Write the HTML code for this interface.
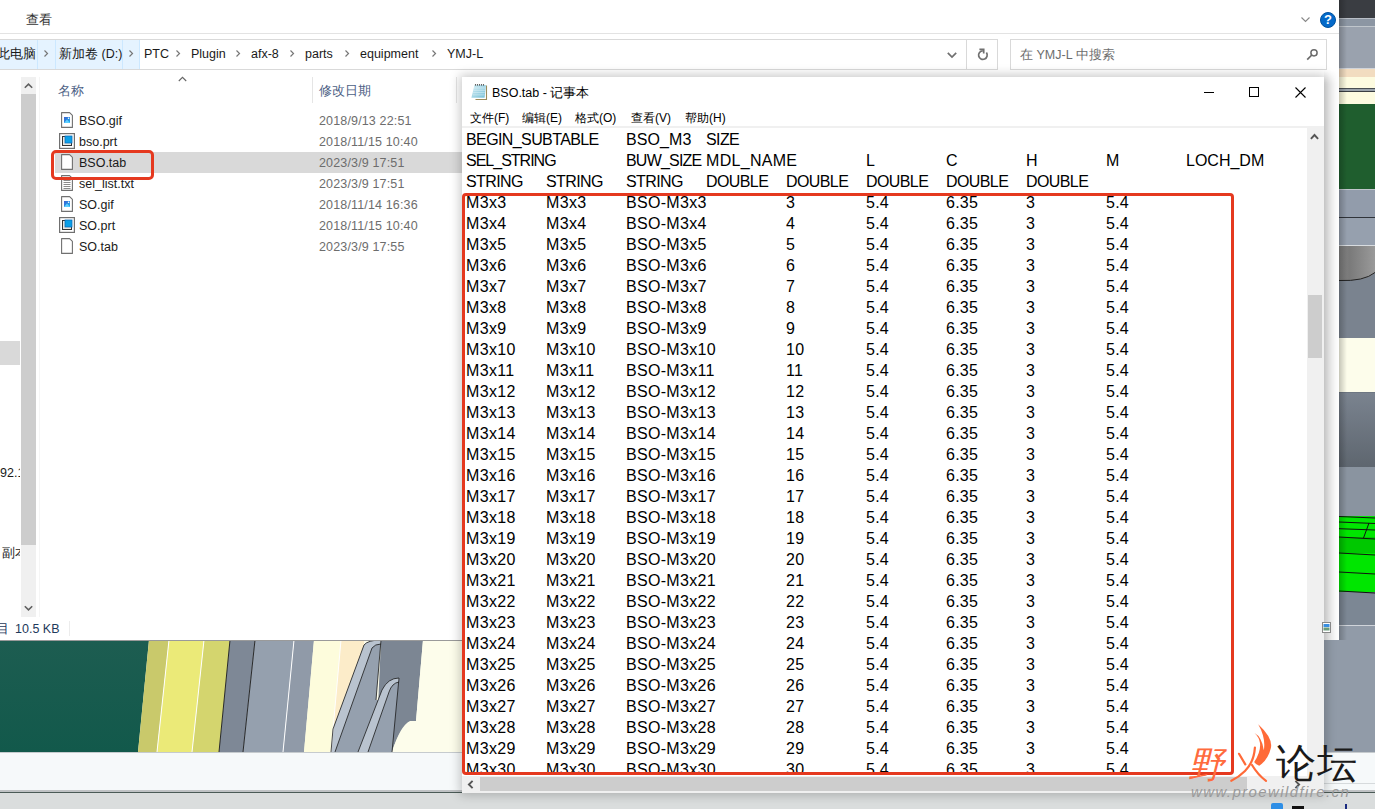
<!DOCTYPE html><html><head><meta charset="utf-8"><title>BSO.tab</title><style>
*{margin:0;padding:0;box-sizing:border-box}
html,body{width:1375px;height:809px;overflow:hidden;background:#dcdcdc;font-family:"Liberation Sans",sans-serif;position:relative}
.a{position:absolute}
.e{position:absolute;font-size:12.5px;color:#1a1a1a;white-space:nowrap;line-height:15px;padding-top:1px}
.d{position:absolute;font-size:12.5px;color:#6d6d6d;white-space:nowrap;line-height:15px;letter-spacing:0.15px;padding-top:1px}
.n{position:absolute;font-size:16px;color:#000;white-space:nowrap;line-height:21px}
.red{position:absolute;border:3px solid #e5391f;border-radius:6px}
svg{position:absolute;overflow:visible}
</style></head><body>
<div class="a" style="left:1324px;top:0px;width:51px;height:18px;background:#3a3d42"></div>
<div class="a" style="left:1324px;top:18px;width:51px;height:1px;background:#b8bec6"></div>
<div class="a" style="left:1324px;top:19px;width:51px;height:7px;background:#8c96a3"></div>
<div class="a" style="left:1324px;top:26px;width:51px;height:1px;background:#c0c6cc"></div>
<div class="a" style="left:1324px;top:27px;width:51px;height:41px;background:#9aa2ae"></div>
<div class="a" style="left:1324px;top:68px;width:51px;height:1px;background:#d0d4da"></div>
<div class="a" style="left:1324px;top:69px;width:51px;height:8px;background:#f2dcc0"></div>
<div class="a" style="left:1324px;top:77px;width:51px;height:11px;background:#fdfbe0"></div>
<div class="a" style="left:1324px;top:88px;width:51px;height:1px;background:#4a4e52"></div>
<div class="a" style="left:1324px;top:89px;width:51px;height:2px;background:#9aa2aa"></div>
<div class="a" style="left:1324px;top:91px;width:51px;height:1px;background:#3a3e42"></div>
<div class="a" style="left:1324px;top:92px;width:51px;height:12px;background:#fdfbe0"></div>
<div class="a" style="left:1324px;top:104px;width:51px;height:85px;background:#1f5e2e"></div>
<div class="a" style="left:1324px;top:189px;width:51px;height:1px;background:#c0c6cc"></div>
<div class="a" style="left:1324px;top:190px;width:51px;height:27px;background:#929cab"></div>
<div class="a" style="left:1324px;top:217px;width:51px;height:1px;background:#30343a"></div>
<div class="a" style="left:1324px;top:218px;width:51px;height:27px;background:#96a0ae"></div>
<div class="a" style="left:1324px;top:245px;width:51px;height:1px;background:#d8dce0"></div>
<div class="a" style="left:1324px;top:246px;width:51px;height:34px;background:#858585"></div>
<div class="a" style="left:1324px;top:280px;width:51px;height:58px;background:#7a838f"></div>
<div class="a" style="left:1324px;top:338px;width:51px;height:54px;background:#fdfdeb"></div>
<div class="a" style="left:1324px;top:392px;width:51px;height:75px;background:#6e7782"></div>
<div class="a" style="left:1324px;top:467px;width:51px;height:49px;background:#8a94a0"></div>
<div class="a" style="left:1324px;top:516px;width:51px;height:76px;background:#00e600"></div>
<div class="a" style="left:1324px;top:592px;width:51px;height:33px;background:#7c8794"></div>
<div class="a" style="left:1324px;top:625px;width:51px;height:1px;background:#d0d4da"></div>
<div class="a" style="left:1324px;top:626px;width:51px;height:126px;background:#919ba8"></div>
<div class="a" style="left:1324px;top:393px;width:51px;height:74px;background:linear-gradient(#7a838f,#5e666f)"></div>
<div class="a" style="left:1324px;top:246px;width:51px;height:34px;background:linear-gradient(90deg,#8a8a8a,#7a7a7a 50%,#9a9a9a)"></div>
<svg width="51" height="40" style="left:1324px;top:250px"><path d="M15 31 Q40 32 51 23 L51 40 L15 40 Z" fill="#7a838f"/><path d="M15 30.5 Q40 31.5 51 22.5" stroke="#222" stroke-width="1" fill="none"/></svg>
<svg width="51" height="80" style="left:1324px;top:512px"><rect x="15" y="25" width="36" height="16" fill="#00c800"/><path d="M15 4.5 L51 6 M15 10 L51 11.5 M15 16.7 L51 18 M15 25 L51 27 M15 41 L51 43 M15 60 L51 62 M15 79 L51 81 M45 11 L39.5 26" stroke="#111" stroke-width="1" fill="none"/></svg>
<div class="a" style="left:1339px;top:0;width:8px;height:646px;background:linear-gradient(90deg,rgba(0,0,0,.22),rgba(0,0,0,0))"></div>
<svg width="1324" height="112" style="left:0;top:640px"><rect x="0" y="0" width="1324" height="112" fill="#fdfdeb"/><defs><linearGradient id="grn" x1="0" y1="0" x2="0" y2="1"><stop offset="0" stop-color="#1d5d51"/><stop offset="1" stop-color="#12594b"/></linearGradient></defs><polygon points="0,0 149,0 138,112 0,112" fill="url(#grn)"/><polygon points="149,0 169,0 157,112 138,112" fill="#c9c96b"/><polygon points="169,0 204,0 192,112 157,112" fill="#ebea78"/><polygon points="204,0 230,0 219,112 192,112" fill="#d4d56e"/><polygon points="230,0 255,0 243,112 219,112" fill="#7e8896"/><polygon points="255,0 294,0 283,112 243,112" fill="#95a0ae"/><polygon points="294,0 314,0 304,112 283,112" fill="#909aa8"/><polygon points="314,0 341,0 331,112 304,112" fill="#fdfcdc"/><polygon points="341,0 364,0 364,5 333,89 331,112 331,112" fill="#fcecc9"/><path d="M381,0 L423,0 L416,81 Q402,81 392,112 L376,112 Z" fill="#7c8693"/><path d="M392,112 Q400,86 410,81 L416,81 L423,0 L462,0 L462,112 Z" fill="#fdfdeb"/><path d="M364,5 Q368,0 381,0 L376,60 L385,60 L370,112 L331,112 L333,89 Z" fill="#95a0ae"/><path d="M364,5 Q368,0 381,0 L381,4 Q375,4 372,8 L335,112 L331,112 L333,89 Z" fill="#b9c3cf"/><path d="M382,50 Q388,38 399,38 L392,112 L358,112 Z" fill="#95a0ae"/><path d="M382,50 Q388,38 399,38 L399,42 Q392,43 389,52 L368,112 L358,112 Z" fill="#b9c3cf"/><path d="M169 0 L157 112 M204 0 L192 112 M294 0 L283 112 M341 0 L331 112" stroke="#fff" stroke-width="1" fill="none"/><path d="M230 0 L219 112 M255 0 L243 112" stroke="#1a1a1a" stroke-width="0.9" fill="none"/><path d="M364,5 Q368,0 381,0 L376,60 M364,5 L333,89 L331,112 M372,8 Q375,4 381,4 M372,8 L335,112 M382,50 Q388,38 399,38 L392,112 M382,50 L358,112 M389,52 Q392,43 399,42 M389,52 L368,112" stroke="#1a1a1a" stroke-width="0.8" fill="none"/><rect x="0" y="0" width="1324" height="1" fill="#9a9a9a"/></svg>
<div class="a" style="left:1324px;top:640px;width:51px;height:112px;background:#919ba8"></div>
<div class="a" style="left:0;top:752px;width:1375px;height:38px;background:#f6f9fa;border-top:1px solid #c6cbce"></div>
<div class="a" style="left:1324px;top:783px;width:51px;height:1px;background:#d6dadc"></div>
<div class="a" style="left:0;top:790px;width:1375px;height:2px;background:#bfc2c4"></div>
<div class="a" style="left:0;top:792px;width:1375px;height:1px;background:#4a5a56"></div>
<div class="a" style="left:0;top:793px;width:1375px;height:16px;background:#dadddd"></div>
<div class="a" style="left:0;top:0;width:1339px;height:640px;background:#fff"></div>
<div class="a" style="left:1324px;top:70px;width:15px;height:570px;background:linear-gradient(90deg,rgba(0,0,0,.1),rgba(0,0,0,0));-webkit-mask-image:linear-gradient(rgba(0,0,0,0),#000 14px)"></div>
<div class="e" style="left:26px;top:12px;color:#333">查看</div>
<svg width="10" height="6" style="left:1301px;top:17px"><path d="M0.5 0.5 L4.5 4.5 L8.5 0.5" stroke="#888" stroke-width="1.1" fill="none"/></svg>
<div class="a" style="left:1320px;top:12px;width:16px;height:16px;border-radius:50%;background:#0469c9;border:1px solid #00529f"></div>
<div class="a" style="left:1320px;top:11px;width:16px;height:16px;font-size:13px;font-weight:bold;color:#fff;text-align:center;line-height:18px">?</div>
<div class="a" style="left:0;top:33px;width:1339px;height:1px;background:#e3e3e3"></div>
<div class="a" style="left:-2px;top:39px;width:1000px;height:31px;border:1px solid #d9d9d9"></div>
<div class="a" style="left:0;top:40px;width:38px;height:29px;background:#e5f3ff;border-right:1px solid #cce8ff"></div>
<div class="a" style="left:38px;top:40px;width:17px;height:29px;background:#e5f3ff"></div>
<div class="a" style="left:55px;top:40px;width:68px;height:29px;background:#e5f3ff;border-left:1px solid #cce8ff;border-right:1px solid #cce8ff"></div>
<div class="a" style="left:123px;top:40px;width:17px;height:29px;background:#e5f3ff;border-right:1px solid #cce8ff"></div>
<div class="e" style="left:-3px;top:46px">此电脑</div>
<div class="e" style="left:59px;top:46px">新加卷 (D:)</div>
<div class="e" style="left:144px;top:46px">PTC</div>
<div class="e" style="left:191px;top:46px">Plugin</div>
<div class="e" style="left:251px;top:46px">afx-8</div>
<div class="e" style="left:305px;top:46px">parts</div>
<div class="e" style="left:360px;top:46px">equipment</div>
<div class="e" style="left:447px;top:46px">YMJ-L</div>
<svg width="5" height="8" style="left:44px;top:50px"><path d="M0.5 0.5 L3.5 3.5 L0.5 6.5" stroke="#777" stroke-width="1.2" fill="none"/></svg>
<svg width="5" height="8" style="left:129px;top:50px"><path d="M0.5 0.5 L3.5 3.5 L0.5 6.5" stroke="#777" stroke-width="1.2" fill="none"/></svg>
<svg width="5" height="8" style="left:176px;top:50px"><path d="M0.5 0.5 L3.5 3.5 L0.5 6.5" stroke="#777" stroke-width="1.2" fill="none"/></svg>
<svg width="5" height="8" style="left:236px;top:50px"><path d="M0.5 0.5 L3.5 3.5 L0.5 6.5" stroke="#777" stroke-width="1.2" fill="none"/></svg>
<svg width="5" height="8" style="left:290px;top:50px"><path d="M0.5 0.5 L3.5 3.5 L0.5 6.5" stroke="#777" stroke-width="1.2" fill="none"/></svg>
<svg width="5" height="8" style="left:345px;top:50px"><path d="M0.5 0.5 L3.5 3.5 L0.5 6.5" stroke="#777" stroke-width="1.2" fill="none"/></svg>
<svg width="5" height="8" style="left:432px;top:50px"><path d="M0.5 0.5 L3.5 3.5 L0.5 6.5" stroke="#777" stroke-width="1.2" fill="none"/></svg>
<svg width="12" height="8" style="left:947px;top:52px"><path d="M0.8 0.8 L5 5 L9.2 0.8" stroke="#707070" stroke-width="1.7" fill="none"/></svg>
<div class="a" style="left:966px;top:40px;width:1px;height:29px;background:#d9d9d9"></div>
<svg width="14" height="14" style="left:976px;top:48px"><path d="M10.4 4.6 A4.3 4.3 0 1 1 6.8 2.8" stroke="#707070" stroke-width="1.7" fill="none"/><path d="M3.4 1.4 H7.7 V5.6" stroke="#707070" stroke-width="1.7" fill="none"/></svg>
<div class="a" style="left:1010px;top:39px;width:317px;height:31px;border:1px solid #d9d9d9"></div>
<div class="e" style="left:1020px;top:47px;color:#6d6d6d">在 YMJ-L 中搜索</div>
<svg width="14" height="14" style="left:1305px;top:47px"><circle cx="9" cy="5.8" r="3.1" stroke="#6a6a6a" stroke-width="1.5" fill="none"/><path d="M6.8 8 L2.2 12.6" stroke="#6a6a6a" stroke-width="1.7"/></svg>
<div class="a" style="left:0;top:341px;width:20px;height:24px;background:#d9d9d9"></div>
<div class="a" style="left:0;top:440px;width:20px;height:140px;overflow:hidden"><div class="e" style="left:0px;top:25px">92.1</div><div class="e" style="left:2px;top:105px">副本</div></div>
<div class="a" style="left:20px;top:460px;width:1px;height:100px;background:#fff"></div>
<div class="a" style="left:21px;top:77px;width:15px;height:540px;background:#f0f0f0"></div>
<div class="a" style="left:21px;top:94px;width:15px;height:451px;background:#cdcdcd"></div>
<svg width="9" height="6" style="left:24px;top:83px"><path d="M0.8 4.8 L4.5 1.2 L8.2 4.8" stroke="#606060" stroke-width="1.6" fill="none"/></svg>
<svg width="9" height="6" style="left:24px;top:605px"><path d="M0.8 1.2 L4.5 4.8 L8.2 1.2" stroke="#606060" stroke-width="1.6" fill="none"/></svg>
<div class="a" style="left:39px;top:77px;width:1px;height:540px;background:#f5f5f5"></div>
<svg width="10" height="6" style="left:178px;top:76px"><path d="M0.8 5 L4.5 1.3 L8.2 5" stroke="#666" stroke-width="1.1" fill="none"/></svg>
<div class="e" style="left:58px;top:83px;color:#4d6185">名称</div>
<div class="e" style="left:319px;top:83px;color:#4d6185">修改日期</div>
<div class="a" style="left:312px;top:77px;width:1px;height:26px;background:#e5e5e5"></div>
<div class="a" style="left:456px;top:77px;width:1px;height:26px;background:#e5e5e5"></div>
<div class="a" style="left:55px;top:152px;width:410px;height:21px;background:#d9d9d9"></div>
<div class="e" style="left:79px;top:113px">BSO.gif</div>
<div class="d" style="left:319px;top:113px">2018/9/13 22:51</div>
<svg width="13" height="17" style="left:61px;top:112px"><path d="M0.6 0.6 H8.6 L11.4 3.4 V15.4 H0.6 Z" fill="#fff" stroke="#707070" stroke-width="1.1" stroke-linejoin="round"/><defs><linearGradient id="gg0" x1="0" y1="0" x2="1" y2="1"><stop offset="0" stop-color="#3b5fd0"/><stop offset="1" stop-color="#19b4f0"/></linearGradient></defs><rect x="3" y="5" width="6" height="6" fill="url(#gg0)"/><path d="M3 11 L6 7.5 L9 11Z" fill="#5fd0ff"/><circle cx="7.6" cy="6.3" r="0.8" fill="#fff"/></svg>
<div class="e" style="left:79px;top:134px">bso.prt</div>
<div class="d" style="left:319px;top:134px">2018/11/15 10:40</div>
<svg width="16" height="16" style="left:59px;top:133px"><rect x="0.6" y="0.6" width="14.8" height="14.8" fill="#fff" stroke="#707070" stroke-width="1.2"/><rect x="3.5" y="3.5" width="9" height="9" fill="#e8e6e0" stroke="#333" stroke-width="1"/><rect x="6" y="3" width="7" height="7" fill="#0aa0e8" stroke="#0a6cb8" stroke-width="0.8"/></svg>
<div class="e" style="left:79px;top:155px">BSO.tab</div>
<div class="d" style="left:319px;top:155px">2023/3/9 17:51</div>
<svg width="13" height="17" style="left:61px;top:154px"><path d="M0.6 0.6 H8.6 L11.4 3.4 V15.4 H0.6 Z" fill="#fff" stroke="#707070" stroke-width="1.1" stroke-linejoin="round"/></svg>
<div class="e" style="left:79px;top:176px">sel_list.txt</div>
<div class="d" style="left:319px;top:176px">2023/3/9 17:51</div>
<svg width="13" height="17" style="left:61px;top:175px"><path d="M0.6 0.6 H8.6 L11.4 3.4 V15.4 H0.6 Z" fill="#fff" stroke="#707070" stroke-width="1.1" stroke-linejoin="round"/><path d="M2.5 5.5 H9.5 M2.5 7.5 H9.5 M2.5 9.5 H9.5 M2.5 11.5 H9.5 M2.5 13.5 H9.5" stroke="#8a8a8a" stroke-width="1"/></svg>
<div class="e" style="left:79px;top:197px">SO.gif</div>
<div class="d" style="left:319px;top:197px">2018/11/14 16:36</div>
<svg width="13" height="17" style="left:61px;top:196px"><path d="M0.6 0.6 H8.6 L11.4 3.4 V15.4 H0.6 Z" fill="#fff" stroke="#707070" stroke-width="1.1" stroke-linejoin="round"/><defs><linearGradient id="gg4" x1="0" y1="0" x2="1" y2="1"><stop offset="0" stop-color="#3b5fd0"/><stop offset="1" stop-color="#19b4f0"/></linearGradient></defs><rect x="3" y="5" width="6" height="6" fill="url(#gg4)"/><path d="M3 11 L6 7.5 L9 11Z" fill="#5fd0ff"/><circle cx="7.6" cy="6.3" r="0.8" fill="#fff"/></svg>
<div class="e" style="left:79px;top:218px">SO.prt</div>
<div class="d" style="left:319px;top:218px">2018/11/15 10:40</div>
<svg width="16" height="16" style="left:59px;top:217px"><rect x="0.6" y="0.6" width="14.8" height="14.8" fill="#fff" stroke="#707070" stroke-width="1.2"/><rect x="3.5" y="3.5" width="9" height="9" fill="#e8e6e0" stroke="#333" stroke-width="1"/><rect x="6" y="3" width="7" height="7" fill="#0aa0e8" stroke="#0a6cb8" stroke-width="0.8"/></svg>
<div class="e" style="left:79px;top:239px">SO.tab</div>
<div class="d" style="left:319px;top:239px">2023/3/9 17:55</div>
<svg width="13" height="17" style="left:61px;top:238px"><path d="M0.6 0.6 H8.6 L11.4 3.4 V15.4 H0.6 Z" fill="#fff" stroke="#707070" stroke-width="1.1" stroke-linejoin="round"/></svg>
<div class="e" style="left:-4px;top:621px;color:#1e395b">目</div>
<div class="e" style="left:15px;top:621px;color:#1e395b">10.5 KB</div>
<div class="a" style="left:69px;top:621px;width:1px;height:15px;background:#ececec"></div>
<div class="a" style="left:462px;top:77px;width:862px;height:716px;background:#fff;box-shadow:0 0 10px 2px rgba(0,0,0,.22)"></div>
<svg width="20" height="20" style="left:469px;top:82px"><defs><linearGradient id="npg" x1="0" y1="0" x2="1" y2="1"><stop offset="0" stop-color="#d5eef5"/><stop offset="1" stop-color="#74bfd6"/></linearGradient></defs><rect x="6" y="3" width="11.8" height="14.6" fill="#fff"/><path d="M6.5 17.5 H17.5 V3.5" stroke="#9b8a5a" stroke-width="1.1" fill="none"/><polygon points="5.5,3 17,3 15.6,15.8 2.4,15.8" fill="url(#npg)"/><path d="M4.8 6 H16.3 M4.5 8.3 H16 M4.2 10.6 H15.8 M3.8 12.9 H15.6" stroke="#e8f6fa" stroke-opacity="0.55" stroke-width="0.9"/><path d="M6.5 2.3 V3.6 M8.5 2.3 V3.6 M10.5 2.3 V3.6 M12.5 2.3 V3.6 M14.5 2.3 V3.6" stroke="#333" stroke-width="1.1"/></svg>
<div class="e" style="left:492px;top:85px;color:#000;font-size:12.5px">BSO.tab - 记事本</div>
<div class="a" style="left:1204px;top:92px;width:10px;height:1px;background:#000"></div>
<div class="a" style="left:1249px;top:87px;width:10px;height:10px;border:1px solid #000"></div>
<svg width="11" height="11" style="left:1295px;top:87px"><path d="M0.5 0.5 L10.5 10.5 M10.5 0.5 L0.5 10.5" stroke="#000" stroke-width="1.1"/></svg>
<div class="e" style="left:470px;top:110px;color:#000;font-size:12px">文件(F)</div>
<div class="e" style="left:522px;top:110px;color:#000;font-size:12px">编辑(E)</div>
<div class="e" style="left:575px;top:110px;color:#000;font-size:12px">格式(O)</div>
<div class="e" style="left:631px;top:110px;color:#000;font-size:12px">查看(V)</div>
<div class="e" style="left:685px;top:110px;color:#000;font-size:12px">帮助(H)</div>
<div class="a" style="left:462px;top:126px;width:862px;height:2px;background:#f0f0f0"></div>
<div class="a" style="left:1307px;top:128px;width:17px;height:665px;background:#f0f0f0"></div>
<svg width="9" height="7" style="left:1310px;top:133px"><path d="M0.9 5.8 L4.5 2 L8.1 5.8" stroke="#555" stroke-width="1.9" fill="none"/></svg>
<div class="a" style="left:1308px;top:295px;width:14px;height:63px;background:#cdcdcd"></div>
<div class="a" style="left:462px;top:776px;width:845px;height:17px;background:#f0f0f0"></div>
<div class="a" style="left:480px;top:777px;width:767px;height:14px;background:#cdcdcd"></div>
<svg width="7" height="9" style="left:467px;top:780px"><path d="M5.6 0.9 L1.9 4.5 L5.6 8.1" stroke="#555" stroke-width="1.9" fill="none"/></svg>
<svg width="7" height="9" style="left:1294px;top:780px"><path d="M1.4 0.9 L5.1 4.5 L1.4 8.1" stroke="#555" stroke-width="1.9" fill="none"/></svg>
<div class="n" style="left:466px;top:129px;letter-spacing:-0.6px">BEGIN_SUBTABLE</div>
<div class="n" style="left:626px;top:129px;letter-spacing:0.1px">BSO_M3</div>
<div class="n" style="left:706px;top:129px;letter-spacing:-0.6px">SIZE</div>
<div class="n" style="left:466px;top:150px;letter-spacing:-1.0px">SEL_STRING</div>
<div class="n" style="left:626px;top:150px;letter-spacing:-0.8px">BUW_SIZE</div>
<div class="n" style="left:706px;top:150px;letter-spacing:0.3px">MDL_NAME</div>
<div class="n" style="left:866px;top:150px;letter-spacing:-0.6px">L</div>
<div class="n" style="left:946px;top:150px;letter-spacing:-0.6px">C</div>
<div class="n" style="left:1026px;top:150px;letter-spacing:-0.6px">H</div>
<div class="n" style="left:1106px;top:150px;letter-spacing:-0.6px">M</div>
<div class="n" style="left:1186px;top:150px">LOCH_DM</div>
<div class="n" style="left:466px;top:171px;letter-spacing:-0.6px">STRING</div>
<div class="n" style="left:546px;top:171px;letter-spacing:-0.6px">STRING</div>
<div class="n" style="left:626px;top:171px;letter-spacing:-0.6px">STRING</div>
<div class="n" style="left:706px;top:171px;letter-spacing:-0.6px">DOUBLE</div>
<div class="n" style="left:786px;top:171px;letter-spacing:-0.6px">DOUBLE</div>
<div class="n" style="left:866px;top:171px;letter-spacing:-0.6px">DOUBLE</div>
<div class="n" style="left:946px;top:171px;letter-spacing:-0.6px">DOUBLE</div>
<div class="n" style="left:1026px;top:171px;letter-spacing:-0.6px">DOUBLE</div>
<div class="n" style="left:466px;top:192px;letter-spacing:0.35px">M3x3</div>
<div class="n" style="left:546px;top:192px;letter-spacing:0.35px">M3x3</div>
<div class="n" style="left:626px;top:192px;letter-spacing:0.3px">BSO-M3x3</div>
<div class="n" style="left:786px;top:192px;letter-spacing:0.25px">3</div>
<div class="n" style="left:866px;top:192px;letter-spacing:0.25px">5.4</div>
<div class="n" style="left:946px;top:192px;letter-spacing:0.25px">6.35</div>
<div class="n" style="left:1026px;top:192px;letter-spacing:0.25px">3</div>
<div class="n" style="left:1106px;top:192px;letter-spacing:0.25px">5.4</div>
<div class="n" style="left:466px;top:213px;letter-spacing:0.35px">M3x4</div>
<div class="n" style="left:546px;top:213px;letter-spacing:0.35px">M3x4</div>
<div class="n" style="left:626px;top:213px;letter-spacing:0.3px">BSO-M3x4</div>
<div class="n" style="left:786px;top:213px;letter-spacing:0.25px">4</div>
<div class="n" style="left:866px;top:213px;letter-spacing:0.25px">5.4</div>
<div class="n" style="left:946px;top:213px;letter-spacing:0.25px">6.35</div>
<div class="n" style="left:1026px;top:213px;letter-spacing:0.25px">3</div>
<div class="n" style="left:1106px;top:213px;letter-spacing:0.25px">5.4</div>
<div class="n" style="left:466px;top:234px;letter-spacing:0.35px">M3x5</div>
<div class="n" style="left:546px;top:234px;letter-spacing:0.35px">M3x5</div>
<div class="n" style="left:626px;top:234px;letter-spacing:0.3px">BSO-M3x5</div>
<div class="n" style="left:786px;top:234px;letter-spacing:0.25px">5</div>
<div class="n" style="left:866px;top:234px;letter-spacing:0.25px">5.4</div>
<div class="n" style="left:946px;top:234px;letter-spacing:0.25px">6.35</div>
<div class="n" style="left:1026px;top:234px;letter-spacing:0.25px">3</div>
<div class="n" style="left:1106px;top:234px;letter-spacing:0.25px">5.4</div>
<div class="n" style="left:466px;top:255px;letter-spacing:0.35px">M3x6</div>
<div class="n" style="left:546px;top:255px;letter-spacing:0.35px">M3x6</div>
<div class="n" style="left:626px;top:255px;letter-spacing:0.3px">BSO-M3x6</div>
<div class="n" style="left:786px;top:255px;letter-spacing:0.25px">6</div>
<div class="n" style="left:866px;top:255px;letter-spacing:0.25px">5.4</div>
<div class="n" style="left:946px;top:255px;letter-spacing:0.25px">6.35</div>
<div class="n" style="left:1026px;top:255px;letter-spacing:0.25px">3</div>
<div class="n" style="left:1106px;top:255px;letter-spacing:0.25px">5.4</div>
<div class="n" style="left:466px;top:276px;letter-spacing:0.35px">M3x7</div>
<div class="n" style="left:546px;top:276px;letter-spacing:0.35px">M3x7</div>
<div class="n" style="left:626px;top:276px;letter-spacing:0.3px">BSO-M3x7</div>
<div class="n" style="left:786px;top:276px;letter-spacing:0.25px">7</div>
<div class="n" style="left:866px;top:276px;letter-spacing:0.25px">5.4</div>
<div class="n" style="left:946px;top:276px;letter-spacing:0.25px">6.35</div>
<div class="n" style="left:1026px;top:276px;letter-spacing:0.25px">3</div>
<div class="n" style="left:1106px;top:276px;letter-spacing:0.25px">5.4</div>
<div class="n" style="left:466px;top:297px;letter-spacing:0.35px">M3x8</div>
<div class="n" style="left:546px;top:297px;letter-spacing:0.35px">M3x8</div>
<div class="n" style="left:626px;top:297px;letter-spacing:0.3px">BSO-M3x8</div>
<div class="n" style="left:786px;top:297px;letter-spacing:0.25px">8</div>
<div class="n" style="left:866px;top:297px;letter-spacing:0.25px">5.4</div>
<div class="n" style="left:946px;top:297px;letter-spacing:0.25px">6.35</div>
<div class="n" style="left:1026px;top:297px;letter-spacing:0.25px">3</div>
<div class="n" style="left:1106px;top:297px;letter-spacing:0.25px">5.4</div>
<div class="n" style="left:466px;top:318px;letter-spacing:0.35px">M3x9</div>
<div class="n" style="left:546px;top:318px;letter-spacing:0.35px">M3x9</div>
<div class="n" style="left:626px;top:318px;letter-spacing:0.3px">BSO-M3x9</div>
<div class="n" style="left:786px;top:318px;letter-spacing:0.25px">9</div>
<div class="n" style="left:866px;top:318px;letter-spacing:0.25px">5.4</div>
<div class="n" style="left:946px;top:318px;letter-spacing:0.25px">6.35</div>
<div class="n" style="left:1026px;top:318px;letter-spacing:0.25px">3</div>
<div class="n" style="left:1106px;top:318px;letter-spacing:0.25px">5.4</div>
<div class="n" style="left:466px;top:339px;letter-spacing:0.35px">M3x10</div>
<div class="n" style="left:546px;top:339px;letter-spacing:0.35px">M3x10</div>
<div class="n" style="left:626px;top:339px;letter-spacing:0.3px">BSO-M3x10</div>
<div class="n" style="left:786px;top:339px;letter-spacing:0.25px">10</div>
<div class="n" style="left:866px;top:339px;letter-spacing:0.25px">5.4</div>
<div class="n" style="left:946px;top:339px;letter-spacing:0.25px">6.35</div>
<div class="n" style="left:1026px;top:339px;letter-spacing:0.25px">3</div>
<div class="n" style="left:1106px;top:339px;letter-spacing:0.25px">5.4</div>
<div class="n" style="left:466px;top:360px;letter-spacing:0.35px">M3x11</div>
<div class="n" style="left:546px;top:360px;letter-spacing:0.35px">M3x11</div>
<div class="n" style="left:626px;top:360px;letter-spacing:0.3px">BSO-M3x11</div>
<div class="n" style="left:786px;top:360px;letter-spacing:0.25px">11</div>
<div class="n" style="left:866px;top:360px;letter-spacing:0.25px">5.4</div>
<div class="n" style="left:946px;top:360px;letter-spacing:0.25px">6.35</div>
<div class="n" style="left:1026px;top:360px;letter-spacing:0.25px">3</div>
<div class="n" style="left:1106px;top:360px;letter-spacing:0.25px">5.4</div>
<div class="n" style="left:466px;top:381px;letter-spacing:0.35px">M3x12</div>
<div class="n" style="left:546px;top:381px;letter-spacing:0.35px">M3x12</div>
<div class="n" style="left:626px;top:381px;letter-spacing:0.3px">BSO-M3x12</div>
<div class="n" style="left:786px;top:381px;letter-spacing:0.25px">12</div>
<div class="n" style="left:866px;top:381px;letter-spacing:0.25px">5.4</div>
<div class="n" style="left:946px;top:381px;letter-spacing:0.25px">6.35</div>
<div class="n" style="left:1026px;top:381px;letter-spacing:0.25px">3</div>
<div class="n" style="left:1106px;top:381px;letter-spacing:0.25px">5.4</div>
<div class="n" style="left:466px;top:402px;letter-spacing:0.35px">M3x13</div>
<div class="n" style="left:546px;top:402px;letter-spacing:0.35px">M3x13</div>
<div class="n" style="left:626px;top:402px;letter-spacing:0.3px">BSO-M3x13</div>
<div class="n" style="left:786px;top:402px;letter-spacing:0.25px">13</div>
<div class="n" style="left:866px;top:402px;letter-spacing:0.25px">5.4</div>
<div class="n" style="left:946px;top:402px;letter-spacing:0.25px">6.35</div>
<div class="n" style="left:1026px;top:402px;letter-spacing:0.25px">3</div>
<div class="n" style="left:1106px;top:402px;letter-spacing:0.25px">5.4</div>
<div class="n" style="left:466px;top:423px;letter-spacing:0.35px">M3x14</div>
<div class="n" style="left:546px;top:423px;letter-spacing:0.35px">M3x14</div>
<div class="n" style="left:626px;top:423px;letter-spacing:0.3px">BSO-M3x14</div>
<div class="n" style="left:786px;top:423px;letter-spacing:0.25px">14</div>
<div class="n" style="left:866px;top:423px;letter-spacing:0.25px">5.4</div>
<div class="n" style="left:946px;top:423px;letter-spacing:0.25px">6.35</div>
<div class="n" style="left:1026px;top:423px;letter-spacing:0.25px">3</div>
<div class="n" style="left:1106px;top:423px;letter-spacing:0.25px">5.4</div>
<div class="n" style="left:466px;top:444px;letter-spacing:0.35px">M3x15</div>
<div class="n" style="left:546px;top:444px;letter-spacing:0.35px">M3x15</div>
<div class="n" style="left:626px;top:444px;letter-spacing:0.3px">BSO-M3x15</div>
<div class="n" style="left:786px;top:444px;letter-spacing:0.25px">15</div>
<div class="n" style="left:866px;top:444px;letter-spacing:0.25px">5.4</div>
<div class="n" style="left:946px;top:444px;letter-spacing:0.25px">6.35</div>
<div class="n" style="left:1026px;top:444px;letter-spacing:0.25px">3</div>
<div class="n" style="left:1106px;top:444px;letter-spacing:0.25px">5.4</div>
<div class="n" style="left:466px;top:465px;letter-spacing:0.35px">M3x16</div>
<div class="n" style="left:546px;top:465px;letter-spacing:0.35px">M3x16</div>
<div class="n" style="left:626px;top:465px;letter-spacing:0.3px">BSO-M3x16</div>
<div class="n" style="left:786px;top:465px;letter-spacing:0.25px">16</div>
<div class="n" style="left:866px;top:465px;letter-spacing:0.25px">5.4</div>
<div class="n" style="left:946px;top:465px;letter-spacing:0.25px">6.35</div>
<div class="n" style="left:1026px;top:465px;letter-spacing:0.25px">3</div>
<div class="n" style="left:1106px;top:465px;letter-spacing:0.25px">5.4</div>
<div class="n" style="left:466px;top:486px;letter-spacing:0.35px">M3x17</div>
<div class="n" style="left:546px;top:486px;letter-spacing:0.35px">M3x17</div>
<div class="n" style="left:626px;top:486px;letter-spacing:0.3px">BSO-M3x17</div>
<div class="n" style="left:786px;top:486px;letter-spacing:0.25px">17</div>
<div class="n" style="left:866px;top:486px;letter-spacing:0.25px">5.4</div>
<div class="n" style="left:946px;top:486px;letter-spacing:0.25px">6.35</div>
<div class="n" style="left:1026px;top:486px;letter-spacing:0.25px">3</div>
<div class="n" style="left:1106px;top:486px;letter-spacing:0.25px">5.4</div>
<div class="n" style="left:466px;top:507px;letter-spacing:0.35px">M3x18</div>
<div class="n" style="left:546px;top:507px;letter-spacing:0.35px">M3x18</div>
<div class="n" style="left:626px;top:507px;letter-spacing:0.3px">BSO-M3x18</div>
<div class="n" style="left:786px;top:507px;letter-spacing:0.25px">18</div>
<div class="n" style="left:866px;top:507px;letter-spacing:0.25px">5.4</div>
<div class="n" style="left:946px;top:507px;letter-spacing:0.25px">6.35</div>
<div class="n" style="left:1026px;top:507px;letter-spacing:0.25px">3</div>
<div class="n" style="left:1106px;top:507px;letter-spacing:0.25px">5.4</div>
<div class="n" style="left:466px;top:528px;letter-spacing:0.35px">M3x19</div>
<div class="n" style="left:546px;top:528px;letter-spacing:0.35px">M3x19</div>
<div class="n" style="left:626px;top:528px;letter-spacing:0.3px">BSO-M3x19</div>
<div class="n" style="left:786px;top:528px;letter-spacing:0.25px">19</div>
<div class="n" style="left:866px;top:528px;letter-spacing:0.25px">5.4</div>
<div class="n" style="left:946px;top:528px;letter-spacing:0.25px">6.35</div>
<div class="n" style="left:1026px;top:528px;letter-spacing:0.25px">3</div>
<div class="n" style="left:1106px;top:528px;letter-spacing:0.25px">5.4</div>
<div class="n" style="left:466px;top:549px;letter-spacing:0.35px">M3x20</div>
<div class="n" style="left:546px;top:549px;letter-spacing:0.35px">M3x20</div>
<div class="n" style="left:626px;top:549px;letter-spacing:0.3px">BSO-M3x20</div>
<div class="n" style="left:786px;top:549px;letter-spacing:0.25px">20</div>
<div class="n" style="left:866px;top:549px;letter-spacing:0.25px">5.4</div>
<div class="n" style="left:946px;top:549px;letter-spacing:0.25px">6.35</div>
<div class="n" style="left:1026px;top:549px;letter-spacing:0.25px">3</div>
<div class="n" style="left:1106px;top:549px;letter-spacing:0.25px">5.4</div>
<div class="n" style="left:466px;top:570px;letter-spacing:0.35px">M3x21</div>
<div class="n" style="left:546px;top:570px;letter-spacing:0.35px">M3x21</div>
<div class="n" style="left:626px;top:570px;letter-spacing:0.3px">BSO-M3x21</div>
<div class="n" style="left:786px;top:570px;letter-spacing:0.25px">21</div>
<div class="n" style="left:866px;top:570px;letter-spacing:0.25px">5.4</div>
<div class="n" style="left:946px;top:570px;letter-spacing:0.25px">6.35</div>
<div class="n" style="left:1026px;top:570px;letter-spacing:0.25px">3</div>
<div class="n" style="left:1106px;top:570px;letter-spacing:0.25px">5.4</div>
<div class="n" style="left:466px;top:591px;letter-spacing:0.35px">M3x22</div>
<div class="n" style="left:546px;top:591px;letter-spacing:0.35px">M3x22</div>
<div class="n" style="left:626px;top:591px;letter-spacing:0.3px">BSO-M3x22</div>
<div class="n" style="left:786px;top:591px;letter-spacing:0.25px">22</div>
<div class="n" style="left:866px;top:591px;letter-spacing:0.25px">5.4</div>
<div class="n" style="left:946px;top:591px;letter-spacing:0.25px">6.35</div>
<div class="n" style="left:1026px;top:591px;letter-spacing:0.25px">3</div>
<div class="n" style="left:1106px;top:591px;letter-spacing:0.25px">5.4</div>
<div class="n" style="left:466px;top:612px;letter-spacing:0.35px">M3x23</div>
<div class="n" style="left:546px;top:612px;letter-spacing:0.35px">M3x23</div>
<div class="n" style="left:626px;top:612px;letter-spacing:0.3px">BSO-M3x23</div>
<div class="n" style="left:786px;top:612px;letter-spacing:0.25px">23</div>
<div class="n" style="left:866px;top:612px;letter-spacing:0.25px">5.4</div>
<div class="n" style="left:946px;top:612px;letter-spacing:0.25px">6.35</div>
<div class="n" style="left:1026px;top:612px;letter-spacing:0.25px">3</div>
<div class="n" style="left:1106px;top:612px;letter-spacing:0.25px">5.4</div>
<div class="n" style="left:466px;top:633px;letter-spacing:0.35px">M3x24</div>
<div class="n" style="left:546px;top:633px;letter-spacing:0.35px">M3x24</div>
<div class="n" style="left:626px;top:633px;letter-spacing:0.3px">BSO-M3x24</div>
<div class="n" style="left:786px;top:633px;letter-spacing:0.25px">24</div>
<div class="n" style="left:866px;top:633px;letter-spacing:0.25px">5.4</div>
<div class="n" style="left:946px;top:633px;letter-spacing:0.25px">6.35</div>
<div class="n" style="left:1026px;top:633px;letter-spacing:0.25px">3</div>
<div class="n" style="left:1106px;top:633px;letter-spacing:0.25px">5.4</div>
<div class="n" style="left:466px;top:654px;letter-spacing:0.35px">M3x25</div>
<div class="n" style="left:546px;top:654px;letter-spacing:0.35px">M3x25</div>
<div class="n" style="left:626px;top:654px;letter-spacing:0.3px">BSO-M3x25</div>
<div class="n" style="left:786px;top:654px;letter-spacing:0.25px">25</div>
<div class="n" style="left:866px;top:654px;letter-spacing:0.25px">5.4</div>
<div class="n" style="left:946px;top:654px;letter-spacing:0.25px">6.35</div>
<div class="n" style="left:1026px;top:654px;letter-spacing:0.25px">3</div>
<div class="n" style="left:1106px;top:654px;letter-spacing:0.25px">5.4</div>
<div class="n" style="left:466px;top:675px;letter-spacing:0.35px">M3x26</div>
<div class="n" style="left:546px;top:675px;letter-spacing:0.35px">M3x26</div>
<div class="n" style="left:626px;top:675px;letter-spacing:0.3px">BSO-M3x26</div>
<div class="n" style="left:786px;top:675px;letter-spacing:0.25px">26</div>
<div class="n" style="left:866px;top:675px;letter-spacing:0.25px">5.4</div>
<div class="n" style="left:946px;top:675px;letter-spacing:0.25px">6.35</div>
<div class="n" style="left:1026px;top:675px;letter-spacing:0.25px">3</div>
<div class="n" style="left:1106px;top:675px;letter-spacing:0.25px">5.4</div>
<div class="n" style="left:466px;top:696px;letter-spacing:0.35px">M3x27</div>
<div class="n" style="left:546px;top:696px;letter-spacing:0.35px">M3x27</div>
<div class="n" style="left:626px;top:696px;letter-spacing:0.3px">BSO-M3x27</div>
<div class="n" style="left:786px;top:696px;letter-spacing:0.25px">27</div>
<div class="n" style="left:866px;top:696px;letter-spacing:0.25px">5.4</div>
<div class="n" style="left:946px;top:696px;letter-spacing:0.25px">6.35</div>
<div class="n" style="left:1026px;top:696px;letter-spacing:0.25px">3</div>
<div class="n" style="left:1106px;top:696px;letter-spacing:0.25px">5.4</div>
<div class="n" style="left:466px;top:717px;letter-spacing:0.35px">M3x28</div>
<div class="n" style="left:546px;top:717px;letter-spacing:0.35px">M3x28</div>
<div class="n" style="left:626px;top:717px;letter-spacing:0.3px">BSO-M3x28</div>
<div class="n" style="left:786px;top:717px;letter-spacing:0.25px">28</div>
<div class="n" style="left:866px;top:717px;letter-spacing:0.25px">5.4</div>
<div class="n" style="left:946px;top:717px;letter-spacing:0.25px">6.35</div>
<div class="n" style="left:1026px;top:717px;letter-spacing:0.25px">3</div>
<div class="n" style="left:1106px;top:717px;letter-spacing:0.25px">5.4</div>
<div class="n" style="left:466px;top:738px;letter-spacing:0.35px">M3x29</div>
<div class="n" style="left:546px;top:738px;letter-spacing:0.35px">M3x29</div>
<div class="n" style="left:626px;top:738px;letter-spacing:0.3px">BSO-M3x29</div>
<div class="n" style="left:786px;top:738px;letter-spacing:0.25px">29</div>
<div class="n" style="left:866px;top:738px;letter-spacing:0.25px">5.4</div>
<div class="n" style="left:946px;top:738px;letter-spacing:0.25px">6.35</div>
<div class="n" style="left:1026px;top:738px;letter-spacing:0.25px">3</div>
<div class="n" style="left:1106px;top:738px;letter-spacing:0.25px">5.4</div>
<div class="n" style="left:466px;top:759px;letter-spacing:0.35px">M3x30</div>
<div class="n" style="left:546px;top:759px;letter-spacing:0.35px">M3x30</div>
<div class="n" style="left:626px;top:759px;letter-spacing:0.3px">BSO-M3x30</div>
<div class="n" style="left:786px;top:759px;letter-spacing:0.25px">30</div>
<div class="n" style="left:866px;top:759px;letter-spacing:0.25px">5.4</div>
<div class="n" style="left:946px;top:759px;letter-spacing:0.25px">6.35</div>
<div class="n" style="left:1026px;top:759px;letter-spacing:0.25px">3</div>
<div class="n" style="left:1106px;top:759px;letter-spacing:0.25px">5.4</div>
<div class="a" style="left:462px;top:776px;width:845px;height:17px;background:#f0f0f0"></div>
<div class="a" style="left:480px;top:777px;width:767px;height:14px;background:#cdcdcd"></div>
<svg width="7" height="9" style="left:467px;top:780px"><path d="M5.6 0.9 L1.9 4.5 L5.6 8.1" stroke="#555" stroke-width="1.9" fill="none"/></svg>
<svg width="7" height="9" style="left:1294px;top:780px"><path d="M1.4 0.9 L5.1 4.5 L1.4 8.1" stroke="#555" stroke-width="1.9" fill="none"/></svg>
<div class="red" style="left:462px;top:193px;width:772px;height:582px;border-radius:4px"></div>
<div class="red" style="left:51px;top:150px;width:103px;height:30px;border-radius:5px"></div>
<div class="a" style="left:1188px;top:745px;font-size:36px;color:#ff6b3d;line-height:40px;font-style:italic;font-weight:300">野</div>
<svg width="60" height="70" style="left:1225px;top:720px"><g transform="translate(-1225,-720)"><path d="M1258.2,724.3 Q1273,738 1270.9,748 Q1268,760 1259.2,765.7 Q1256,765 1254.2,762 Q1261,752 1260,743 Q1259,737 1254.5,733 Q1262,737 1263.8,750.3 Q1266,738 1258.2,724.3 Z" fill="#ff6a38"/><path d="M1239,753.8 L1245.3,764.4" stroke="#ff6a38" stroke-width="2.2" stroke-linecap="round" fill="none"/><path d="M1254.9,747.6 Q1254,762 1245,771 Q1239,777 1231.3,780.8" stroke="#ff6a38" stroke-width="2.2" stroke-linecap="round" fill="none"/><path d="M1252,765 Q1258,775 1266,780.8" stroke="#ff6a38" stroke-width="2.2" stroke-linecap="round" fill="none"/></g></svg>
<div class="a" style="left:1276px;top:740px;font-size:40px;letter-spacing:1px;color:#1a1a1a;line-height:46px;font-weight:100">论坛</div>
<div class="a" style="left:1191px;top:784px;font-size:15px;color:#9a9a9a;line-height:16px;font-style:italic;letter-spacing:1.4px">www.proewildfire.cn</div>
<svg width="10" height="12" style="left:1322px;top:622px"><rect x="0.5" y="0.5" width="8" height="10" fill="#fff" stroke="#888"/><rect x="1.5" y="2" width="6" height="3" fill="#3a8ee0"/><rect x="1.5" y="5.5" width="6" height="3" fill="#6a9a7a"/></svg>
<div class="a" style="left:1292px;top:806px;width:12px;height:3px;background:#111"></div>
<div class="a" style="left:1345px;top:804px;width:2px;height:5px;background:#1a2a80"></div>
<div class="a" style="left:1271px;top:803px;width:12px;height:8px;background:#2d8ee6;border-radius:2px"></div>
</body></html>
